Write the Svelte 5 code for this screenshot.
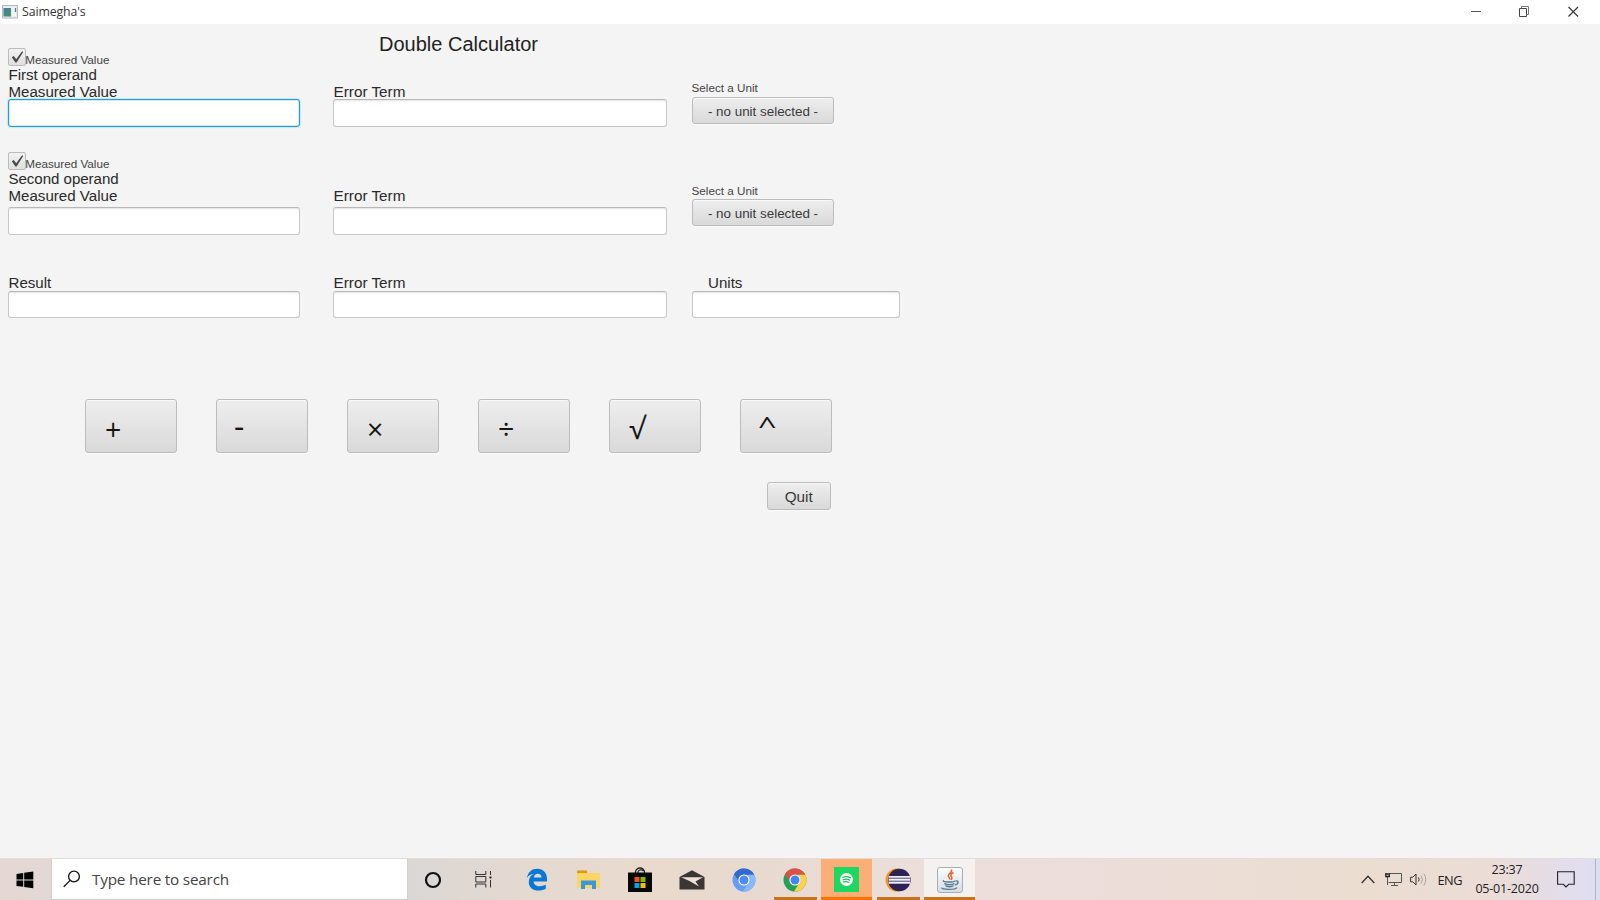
<script>
  const operators = [
    { name: 'add', symbol: '+' },
    { name: 'sub', symbol: '-' },
    { name: 'mul', symbol: '×' },
    { name: 'div', symbol: '÷' },
    { name: 'root', symbol: '√' },
    { name: 'pow', symbol: '^' }
  ];
  const operands = [
    { title: 'First operand', kind: 'first' },
    { title: 'Second operand', kind: 'second' }
  ];
</script>

<div class="screen">
  <header class="titlebar">
    <svg class="appicon" width="16" height="14" viewBox="0 0 16 14">
      <defs><linearGradient id="winfill" x1="0" y1="0" x2="1" y2="1"><stop offset="0" stop-color="#4a79a8" /><stop offset="1" stop-color="#3e9b62" /></linearGradient></defs>
      <rect x=".5" y=".5" width="15" height="12.5" fill="#e9ebef" stroke="#b5b8bd" />
      <rect x="1.5" y="3" width="7.5" height="8.5" fill="url(#winfill)" />
      <rect x="10.5" y="3" width="3.5" height="8.5" fill="#f8f8fa" />
      <path d="M13.5 3v4" stroke="#43887d" stroke-width="1.3" />
    </svg>
    <span class="wintitle">Saimegha's</span>
    <div class="controls">
      <svg width="48" height="24" viewBox="0 0 48 24"><path d="M19 11.5h10" stroke="#555" /></svg>
      <svg width="48" height="24" viewBox="0 0 48 24" fill="none" stroke="#444"><path d="M19.5 8.5h7v8h-7z" /><path d="M21.5 8.5v-2h7v8h-2" stroke="#777" /></svg>
      <svg width="50" height="24" viewBox="0 0 50 24"><path d="M20.5 7l9.500 9.500M30 7l-9.500 9.500" stroke="#333" stroke-width="1.100" /></svg>
    </div>
  </header>

  <main>
    <h1>Double Calculator</h1>
    {#each operands as op}
      <section class="grid {op.kind}">
        <div class="col">
          <div class="checkrow">
            <span class="check"><svg width="16" height="16" viewBox="0 0 16 16"><path d="M2.800 8.300l2-1.300 2.400 3.200 5.900-7.900 1.100.600-6.600 10.700H6.400z" fill="#4a4a4a" /></svg></span>
            <span class="small">Measured Value</span>
          </div>
          <span class="label one">{op.title}</span>
          <span class="label two">Measured Value</span>
          <div class="field" class:focused={op.kind === 'first'}></div>
        </div>
        <div class="col error">
          <span class="label two">Error Term</span>
          <div class="field"></div>
        </div>
        <div class="col unit">
          <span class="small">Select a Unit</span>
          <button class="btn combo"><span>- no unit selected -</span></button>
        </div>
      </section>
    {/each}

    <section class="grid result">
      <div class="col"><span class="label">Result</span><div class="field"></div></div>
      <div class="col"><span class="label">Error Term</span><div class="field"></div></div>
      <div class="col"><span class="label units">Units</span><div class="field"></div></div>
    </section>

    <section class="ops">
      {#each operators as o}
        <button class="btn op {o.name}"><span>{o.symbol}</span></button>
      {/each}
    </section>
    <div class="quitrow"><button class="btn quit">Quit</button></div>
  </main>

  <footer class="taskbar">
    <div class="start"><svg width="18" height="18" viewBox="0 0 18 18"><path d="M.5 3L7.200 2v6.400H.5zM8.200 1.800L17.300.5v7.900H8.200zM.5 9.400h6.700v6.400L.5 14.900zM8.200 9.400h9.100v7.900l-9.100-1.400z" /></svg></div>
    <div class="search">
      <svg width="18" height="18" viewBox="0 0 18 18" fill="none" stroke="#111" stroke-width="1.300"><circle cx="11" cy="6.500" r="5.400" /><path d="M7.100 10.400L.8 16.800" /></svg>
      <span>Type here to search</span>
    </div>
    <div class="task narrow"><svg width="18" height="18" viewBox="0 0 18 18"><circle cx="9" cy="9" r="7" fill="none" stroke="#111" stroke-width="2.200" /></svg></div>
    <div class="task narrow"><svg width="18" height="17" viewBox="0 0 18 17" fill="none" stroke="#333"><path d="M.8 0v3.500h10V0M.8 16.500V13h10v3.500M.8 5.500h10v5.500H.8z" /><path d="M15.500 0v4M15.500 9v7.500" /><path d="M14.500 5.500h2v2h-2z" fill="#222" stroke="none" /></svg></div>
    <div class="task edge"><svg width="22" height="23" viewBox="0 0 22 23"><path d="M1 10C1.800 4 6 .7 11.300.7 17.500.7 21 5 21 10.800v2.700H7.700c.2 3.300 2.800 4.700 6 4.700 2.200 0 4.400-.6 6.100-1.700v4.300c-2 1.200-4.600 1.800-7.300 1.800-6 0-9.700-3.400-9.700-8.700 0-4 2-6.800 5.300-8.200C5 6 2.500 7.500 1 10zm6.800-.4h7.700c0-2.500-1.300-3.900-3.600-3.900-2.300 0-3.800 1.600-4.100 3.900z" fill="#0878d8" /></svg></div>
    <div class="task"><svg width="23" height="20" viewBox="0 0 23 20"><path d="M0 1.500Q0 .5 1 .5h8l2 2.500h11q1 0 1 1V18H0z" fill="#f9cf54" /><path d="M0 1.500Q0 .5 1 .5h9v2.500H0z" fill="#d99a18" /><path d="M0 3.500h23V18H0z" fill="#fbd664" /><path d="M4 19v-8.500h15V19h-4v-4H8v4z" fill="#3b97da" /></svg></div>
    <div class="task"><svg width="24" height="25" viewBox="0 0 24 25"><path d="M7.500 6V5a4.500 4 0 0 1 9 0v1M10 6V5a3 2.500 0 0 1 5.500-1" fill="none" stroke="#222" stroke-width="1.300" /><path d="M0 5.500h24V25H0z" fill="#080808" /><path d="M6.500 10h5v5h-5z" fill="#f25022" /><path d="M12.500 10h5v5h-5z" fill="#7fba00" /><path d="M6.500 16h5v5h-5z" fill="#00a4ef" /><path d="M12.500 16h5v5h-5z" fill="#ffb900" /></svg></div>
    <div class="task"><svg width="26" height="20" viewBox="0 0 26 20"><path d="M.5 7L13 .3 25.500 7v12.500H.5z" fill="#393633" /><path d="M2 7.300h22l-7.500 4.200 3.500 5L10.500 11z" fill="#eee1d7" /></svg></div>
    <div class="task"><svg width="24" height="24" viewBox="0 0 24 24"><circle cx="12" cy="12" r="11.500" fill="#669df6" /><path d="M2 6.200A11.500 11.500 0 0 1 22.200 6.800H12A5.200 5.200 0 0 0 7 13.500z" fill="#3268cf" /><path d="M22.200 6.800A11.500 11.500 0 0 1 11 23.500l5.500-9A5.200 5.200 0 0 0 14 7z" fill="#8ab9fb" /><circle cx="12" cy="12" r="5.600" fill="#fff" /><circle cx="12" cy="12" r="4.500" fill="#4d8bef" /></svg></div>
    <div class="task open"><svg width="24" height="24" viewBox="0 0 24 24"><circle cx="12" cy="12" r="11.500" fill="#24a058" /><path d="M2 6.200A11.500 11.500 0 0 1 22.200 6.800H12A5.200 5.200 0 0 0 7 14z" fill="#dd5147" /><path d="M22.200 6.800A11.500 11.500 0 0 1 11 23.500l5.500-9A5.200 5.200 0 0 0 14 6.800z" fill="#ffd04b" /><circle cx="12" cy="12" r="5.600" fill="#fff" /><circle cx="12" cy="12" r="4.500" fill="#4285f4" /></svg></div>
    <div class="task spotify"><svg width="25" height="25" viewBox="0 0 25 25"><path d="M0 0h25v25H0z" fill="#1ed760" /><circle cx="12.500" cy="12.500" r="6.500" fill="#fff" /><path d="M8.800 10.200q4-1.400 7.700.6M9.200 12.600q3.500-1 6.500.5M9.500 14.800q3-.7 5.300.4" fill="none" stroke="#20bb59" stroke-width="1.200" stroke-linecap="round" /></svg></div>
    <div class="task open"><svg width="26" height="24" viewBox="0 0 26 24"><circle cx="12" cy="12" r="11.500" fill="#f7941e" /><circle cx="14.300" cy="12" r="11.300" fill="#2c2255" /><path d="M3.500 8h21.600v7.700H3.500z" fill="#f3f0f7" /><path d="M3 10.200h22.500M3 13.200h22.500" stroke="#51477f" stroke-width="1" /></svg></div>
    <div class="task java"><svg width="26" height="26" viewBox="0 0 26 26"><defs><linearGradient id="jv" x1="0" y1="0" x2="0" y2="1"><stop offset="0" stop-color="#fdfdfe" /><stop offset="1" stop-color="#d5dde3" /></linearGradient></defs><rect x=".5" y=".5" width="25" height="25" rx="2.500" fill="url(#jv)" stroke="#a5aeb5" /><path d="M14.500 2.500c1.500 3-4.500 4.500-3 7 .8 1.200 1.500 1.800 1.200 3.200M16.500 5.500c-4 2.200-2.700 3.500-1.800 4.700.7 1-.1 2-.8 2.400" fill="none" stroke="#e2652b" stroke-width="1.500" /><path d="M7 13.500c-2 1 1 1.500 4.500 1.500s6-.5 6.500-1.200M7.500 16.300c1 1.700 8 1.700 10 .2M8.500 18.700c1.500 1.300 6.500 1.300 8 .1M5 20.500c-1.500 2.500 13.500 2.500 15 0M18.500 14c3.500-.8 3.500 2.800-.3 4" fill="none" stroke="#54788f" stroke-width="1.400" /></svg></div>
    <div class="tray">
      <svg class="chev" width="14" height="9" viewBox="0 0 14 9"><path d="M.7 8L7 1.300 13.300 8" fill="none" stroke="#333" stroke-width="1.300" /></svg>
      <svg class="net" width="18" height="15" viewBox="0 0 18 15" fill="none" stroke="#555"><path d="M5 1.500h11.500v9H3.500M2.500 5v8M9.500 10.500v3M6 13.500h7" /><path d="M.8 1v3.500h3.500V1M1.500 2h2" stroke="#222" stroke-width="1.300" /></svg>
      <svg class="vol" width="18" height="15" viewBox="0 0 18 15" fill="none" stroke="#333"><path d="M.6 5.200h2.200L6 2v11L2.800 9.800H.6z" /><path d="M8.500 5.500q1.300 2 0 4" /><path d="M11 3.500q2.800 4 0 8M13.800 1.500q4 6 0 12" stroke="#aaa3a0" /></svg>
      <span class="lang">ENG</span>
      <div class="clock"><span>23:37</span><span>05-01-2020</span></div>
      <svg class="note" width="18" height="18" viewBox="0 0 18 18"><path d="M.6.8h16.600v12.500h-5.500L9 16l-2.700-2.700H.6z" fill="none" stroke="#222" stroke-width="1.100" /></svg>
    </div>
    <div class="peek"></div>
  </footer>
</div>

<style>
  :global(body) { margin: 0; overflow: hidden; }
  * { box-sizing: border-box; }
  .screen { width: 1600px; height: 900px; display: flex; flex-direction: column; background: #f4f4f4; color: #1c1c1c; font-family: "Liberation Sans", Arial, sans-serif; }
  svg { display: block; flex: none; }
  .titlebar { height: 24px; flex: none; background: #fff; display: flex; align-items: center; padding-left: 2px; }
  .appicon { margin-right: 4px; }
  .wintitle { font: 12.300px/24px "Open Sans", sans-serif; color: #333; letter-spacing: -.1px; }
  .controls { margin-left: auto; display: flex; margin-right: 2px; }
  main { flex: 1; min-height: 0; }
  h1 { margin: 0; padding: 8px 0 0 379px; height: 24px; font-size: 20px; line-height: 24px; font-weight: 400; color: #222; white-space: nowrap; }
  .grid { display: grid; grid-template-columns: 325px 358.500px 208px; padding-left: 8px; white-space: nowrap; }
  .col { display: flex; flex-direction: column; align-items: flex-start; }
  .col:nth-child(1) .field { width: 292px; }
  .col:nth-child(2) .field { width: 334px; }
  .col:nth-child(3) .field { width: 208px; }
  .first { height: 104px; }
  .second { height: 123px; }
  .checkrow { display: flex; align-items: flex-end; height: 18px; }
  .check { width: 18px; height: 18px; border: 1px solid #bcbcbc; border-radius: 2px; background: linear-gradient(#f2f2f2, #dfdfdf); }
  .small { font-size: 11.700px; line-height: 12px; color: #444; }
  .checkrow .small { margin-left: -.8px; }
  .label { font-size: 15.100px; line-height: 16px; height: 16px; color: #2a2a2a; padding-left: .5px; }
  .one { margin-top: 1px; letter-spacing: -.05px; }
  .two { line-height: 18px; }
  .field { height: 28px; flex: none; background: #fff; border: 1px solid #c8c8c8; border-top-color: #b7b7b7; border-radius: 3px; box-shadow: inset 0 2px 2px -1px #e2e2e2; }
  .focused { border-color: #239fce; box-shadow: inset 0 0 0 1px #d0edf8, 0 0 2px #72c2e1; }
  .error { padding-top: 35px; }
  .error .label, .result .col:nth-child(2) .label { font-size: 15.300px; }
  .second .two { margin-bottom: 4px; }
  .unit { padding-top: 34px; }
  .unit .small { margin-bottom: 3px; }
  .second .unit { padding-top: 33px; }
  .second .unit .small { margin-bottom: 2px; }
  .btn { border: 1px solid #bcbcbc; border-radius: 3px; background: linear-gradient(#eeeeee, #d9d9d9); box-shadow: inset 0 1px 0 #f8f8f8, 0 1px 0 #fafafa; color: #3a3a3a; font-family: inherit; padding: 0; }
  .combo { width: 142px; height: 27px; font-size: 13.400px; line-height: 27px; padding-left: 1px; }
  .combo span { display: block; line-height: 25px; padding-top: 1px; }
  .result { height: 124px; }
  .result .field { height: 27px; }
  .units { padding-left: 16.500px; }
  .ops { display: flex; gap: 39px; padding-left: 85px; height: 83px; }
  .op { width: 92px; height: 54px; display: flex; justify-content: flex-start; padding-left: 19px; font: 28px/52px "Open Sans", sans-serif; color: #151515; }
  .op span { display: block; line-height: 58px; }
  .add, .mul, .div { font-size: 28.500px; }
  .sub { padding-left: 17px; font-size: 32px; }
  .sub span { line-height: 52px; }
  .root { font-size: 30px; }
  .root span { line-height: 55px; }
  .pow { padding-left: 17px; font-size: 29px; }
  .pow span { line-height: 52px; transform: scale(1.120, .800); transform-origin: left 45%; }
  .quitrow { padding-left: 766.500px; }
  .quit { width: 64.500px; height: 28px; font-size: 15.300px; line-height: 27px; }
  .taskbar { height: 42px; flex: none; display: flex; font-family: "Open Sans", sans-serif; border-top: 1px solid #e1ddda; background: linear-gradient(90deg, #e4d7d4 0, #e2d8d5 50px, #dad7d5 410px, #e5d9d0 530px, #e9dacd 650px, #e8dacf 760px, #ecdedb 930px, #ecddd9 1120px, #ecddd1 1360px, #ebdcd6 1490px, #e1def0 1585px, #dcdff0 1600px); }
  .start { width: 50.500px; display: flex; align-items: center; justify-content: center; }
  .search { width: 357px; background: #fff; border: 1px solid #cfcfcf; border-top-width: 0; display: flex; align-items: center; padding-left: 11.500px; gap: 11px; font-size: 15.300px; letter-spacing: -.2px; color: #444; }
  .task { width: 51.600px; display: flex; align-items: center; justify-content: center; }
  .edge { margin-left: 2px; }
  .narrow { width: 51px; }
  .narrow svg { margin-right: 1px; }
  .open { background: linear-gradient(#cb7118, #cb7118) center bottom / 43px 3px no-repeat; }
  .spotify { width: 51px; margin-right: .6px; background: linear-gradient(#ff7200, #ff7200) center bottom / 100% 3px no-repeat, #fbae75; }
  .java { width: 51px; background: linear-gradient(#cb7118, #cb7118) center bottom / 100% 3px no-repeat, #f5f1ef; }
  .tray { margin-left: auto; display: flex; align-items: center; color: #222; }
  .chev { margin-right: 10px; }
  .net { margin-right: 7px; }
  .vol { margin-right: 9.500px; }
  .lang { width: 37.500px; font-size: 12.800px; letter-spacing: -.5px; }
  .clock { width: 64px; margin-right: 18px; display: flex; flex-direction: column; align-items: center; font-size: 12.500px; line-height: 19px; letter-spacing: -.2px; white-space: nowrap; margin-top: -2px; }
  .peek { width: 5px; margin-left: 20px; border-left: 1px solid #b3b2c7; }
</style>
